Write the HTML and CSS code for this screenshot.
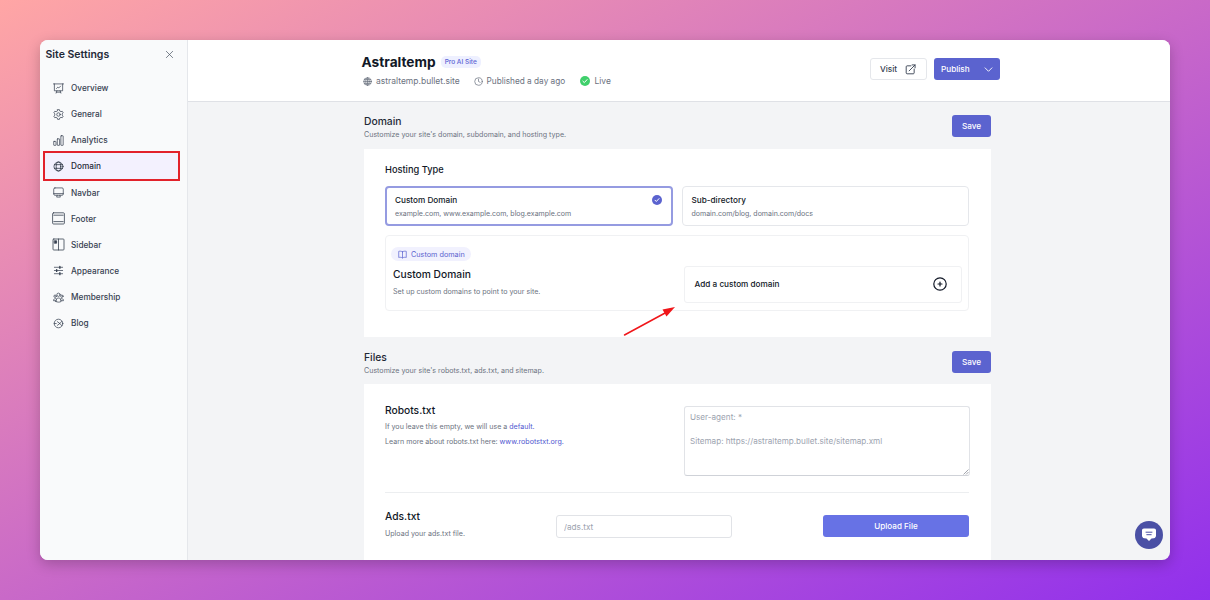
FILE: index.html
```html
<!DOCTYPE html>
<html lang="en">
<head>
    <meta charset="UTF-8">
    <meta name="viewport" content="width=device-width, initial-scale=1.0">
    <title>Site Settings</title>
    <link rel="stylesheet" href="styles.css">
</head>
<body>
    <div class="window">
        <aside class="sidebar">
            <div class="sidebar-head">
                <h2>Site Settings</h2>
                <svg class="close" viewBox="0 0 10 10"><path d="M1.5 1.5l7 7M8.5 1.5l-7 7"/></svg>
            </div>
            <nav class="menu">
                <a class="menu-item">
                    <svg viewBox="0 0 12 12"><path d="M.5 1h11M1.5 1v7.5h9V1M4.2 8.5l-.8 2.5M7.800 8.500l.8 2.500M3.800 10h4.400M3.800 6l1.500-1.500 1 .9 2-2"/></svg>
                    <span>Overview</span>
                </a>
                <a class="menu-item">
                    <svg viewBox="0 0 12 12"><path d="M5 .7h2l.4 1.500 1.200.7 1.500-.4 1 1.700-1.100 1.100v1.400l1.100 1.100-1 1.700-1.500-.4-1.200.7L7 11.300H5l-.4-1.500-1.200-.7-1.500.4-1-1.700L2 6.700V5.300L.9 4.200l1-1.700 1.500.4 1.200-.7z"/><circle cx="6" cy="6" r="1.900"/></svg>
                    <span>General</span>
                </a>
                <a class="menu-item">
                    <svg viewBox="0 0 12 12"><rect x=".8" y="7" width="2.500" height="4.300" rx=".4"/><rect x="4.700" y="4.200" width="2.500" height="7.100" rx=".4"/><rect x="8.600" y=".8" width="2.500" height="10.500" rx=".4"/></svg>
                    <span>Analytics</span>
                </a>
                <a class="menu-item active">
                    <svg viewBox="0 0 12 12"><circle cx="6" cy="6" r="4.900"/><ellipse cx="6" cy="6" rx="2.500" ry="4.900"/><path d="M1.700 4h8.600M1.700 8h8.600"/></svg>
                    <span>Domain</span>
                </a>
                <a class="menu-item">
                    <svg viewBox="0 0 12 12"><rect x=".8" y="1" width="10.400" height="8" rx="1.300"/><path d="M.8 7.200h10.400M4.500 9l-.5 2h4l-.5-2"/></svg>
                    <span>Navbar</span>
                </a>
                <a class="menu-item">
                    <svg class="wide" viewBox="0 0 13 13"><rect x=".6" y=".8" width="11.800" height="11.200" rx="1"/><path d="M1.800 3.200h9.400M1.800 9.600h9.400"/></svg>
                    <span>Footer</span>
                </a>
                <a class="menu-item">
                    <svg class="wide" viewBox="0 0 13 13"><rect x="1" y="1" width="11" height="11" rx=".8"/><path d="M6.500 1v11"/><path class="solid" d="M2.600 2.800h2v2.400h-2z"/></svg>
                    <span>Sidebar</span>
                </a>
                <a class="menu-item">
                    <svg viewBox="0 0 12 12"><path d="M1.500 2.500h9M1.500 6h9M1.500 9.500h9"/><path d="M7.500 1.500v2M4 5v2M7.500 8.500v2" stroke-width="1.500"/></svg>
                    <span>Appearance</span>
                </a>
                <a class="menu-item">
                    <svg viewBox="0 0 12 12"><circle cx="6" cy="3" r="1.800"/><circle cx="2.300" cy="4.600" r="1.300"/><circle cx="9.700" cy="4.600" r="1.300"/><path d="M3.200 10.400c-.1-5.200 5.700-5.200 5.600 0-1.700.9-3.900.9-5.600 0zM3.200 9.500H.6C.4 7.700 1.700 6.900 3.600 7.300M8.800 9.500h2.600c.2-1.800-1.100-2.600-3-2.200"/></svg>
                    <span>Membership</span>
                </a>
                <a class="menu-item">
                    <svg viewBox="0 0 12 12"><circle cx="6" cy="6" r="4.700"/><path d="M4.800 4l2.600 2-2.600 2M1.300 6h2.200M7.400 6l2.400-2.500M7.400 6l2.400 2.500"/></svg>
                    <span>Blog</span>
                </a>
            </nav>
        </aside>

        <div class="page">
            <header class="topbar">
                <div class="site">
                    <div class="site-title">
                        <h1>Astraltemp</h1>
                        <span class="plan">Pro AI Site</span>
                    </div>
                    <div class="site-meta">
                        <span class="meta url">
                            <svg viewBox="0 0 10 10"><circle cx="5" cy="5" r="4.200"/><ellipse cx="5" cy="5" rx="2" ry="4.200"/><path d="M.8 5h8.400M5 .8v8.400M1.500 2.900h7M1.500 7.100h7"/></svg>
                            astraltemp.bullet.site
                        </span>
                        <span class="meta published">
                            <svg viewBox="0 0 10 10"><circle cx="5" cy="5" r="4.200"/><path d="M5 2.300V5l1.800.9"/></svg>
                            Published a day ago
                        </span>
                        <span class="meta live">
                            <svg viewBox="0 0 10 10"><circle cx="5" cy="5" r="5"/><path d="M2.900 5.200l1.400 1.400 2.800-3"/></svg>
                            Live
                        </span>
                    </div>
                </div>
                <div class="actions">
                    <button class="btn-visit">
                        Visit
                        <svg viewBox="0 0 12 12"><path d="M6.500 2H2.300c-.6 0-1 .4-1 1v6.700c0 .6.4 1 1 1H9c.6 0 1-.4 1-1V5.500M4.500 7.500L11 1M7.800 1H11v3.200"/></svg>
                    </button>
                    <button class="btn-publish">
                        Publish
                        <svg viewBox="0 0 10 10"><path d="M1.200 3.200L5 7l3.800-3.800"/></svg>
                    </button>
                </div>
            </header>

            <main class="content">
                <section>
                    <div class="section-head">
                        <div>
                            <h3>Domain</h3>
                            <p>Customize your site's domain, subdomain, and hosting type.</p>
                        </div>
                        <button class="btn-save">Save</button>
                    </div>
                    <div class="card domain-card">
                        <h4>Hosting Type</h4>
                        <div class="options">
                            <div class="option selected">
                                <h5>Custom Domain</h5>
                                <p>example.com, www.example.com, blog.example.com</p>
                                <svg class="check" viewBox="0 0 10 10"><circle cx="5" cy="5" r="5"/><path d="M3 5.200l1.300 1.300L7 3.600"/></svg>
                            </div>
                            <div class="option">
                                <h5>Sub-directory</h5>
                                <p>domain.com/blog, domain.com/docs</p>
                            </div>
                        </div>
                        <div class="custom">
                            <div>
                                <span class="tag">
                                    <svg viewBox="0 0 10 10"><path d="M5 2C3.800 1.200 2.200 1.200.8 1.500v6.800C2.200 8 3.800 8 5 8.800c1.200-.8 2.800-.8 4.200-.5V1.500C7.800 1.200 6.200 1.200 5 2zM5 2v6.800"/></svg>
                                    Custom domain
                                </span>
                                <h4>Custom Domain</h4>
                                <p>Set up custom domains to point to your site.</p>
                            </div>
                            <div class="add-domain">
                                <span>Add a custom domain</span>
                                <svg viewBox="0 0 14 14"><circle cx="7" cy="7" r="6.200"/><path d="M7 5v4M5 7h4"/></svg>
                            </div>
                        </div>
                        <svg class="arrow" viewBox="0 0 54 32"><path d="M1.500 29L43 6.500"/><polygon points="52,1 39.500,3.500 43.500,10.500"/></svg>
                    </div>
                </section>

                <section>
                    <div class="section-head files-head">
                        <div>
                            <h3>Files</h3>
                            <p>Customize your site's robots.txt, ads.txt, and sitemap.</p>
                        </div>
                        <button class="btn-save">Save</button>
                    </div>
                    <div class="card files-card">
                        <div class="robots">
                            <div>
                                <h4>Robots.txt</h4>
                                <p>If you leave this empty, we will use a <a>default.</a></p>
                                <p>Learn more about robots.txt here: <a>www.robotstxt.org.</a></p>
                            </div>
                            <div class="editor">
                                <textarea placeholder="User-agent: *&#10;&#10;Sitemap: https://astraltemp.bullet.site/sitemap.xml"></textarea>
                                <svg class="grip" viewBox="0 0 6 6"><path d="M.8 5.200l4.400-4.400M3.300 5.200l1.900-1.900"/></svg>
                            </div>
                        </div>
                        <div class="ads">
                            <div>
                                <h4>Ads.txt</h4>
                                <p>Upload your ads.txt file.</p>
                            </div>
                            <input type="text" placeholder="/ads.txt">
                            <button class="btn-upload">Upload File</button>
                        </div>
                    </div>
                </section>
            </main>
        </div>

        <button class="chat">
            <svg viewBox="0 0 16 16"><path class="bubble" d="M3 1.500h10c1.400 0 2 .8 2 2v5c0 1.600-.8 2.500-2.200 2.700L10.500 11.500 8 14l-2.500-2.500-2.300-.3C1.800 11 1 10.100 1 8.500v-5c0-1.200.6-2 2-2z"/><path class="lines" d="M5 5.200h6M5.800 7.700h4.400"/></svg>
        </button>
    </div>
</body>
</html>
```
FILE: styles.css
```css
* {
    box-sizing: border-box;
}
body {
    margin: 0;
    height: 600px;
    padding: 40px;
    overflow: hidden;
    font-family: Inter, "Liberation Sans", sans-serif;
    color: #1f2937;
    background: linear-gradient(to bottom right, #ffa6a5, #c969c8 50%, #9130ec);
}
h1, h2, h3, h4, h5, p {
    margin: 0;
}
button, input, textarea {
    font-family: inherit;
}
svg {
    display: block;
    flex-shrink: 0;
    fill: none;
    stroke: currentColor;
    stroke-width: 0.8;
    stroke-linecap: round;
    stroke-linejoin: round;
}
.window {
    position: relative;
    display: flex;
    width: 1130px;
    height: 520px;
    overflow: hidden;
    border-radius: 8px;
    background-color: #f3f4f6;
    box-shadow: 0 4px 14px rgba(0, 0, 0, 0.22);
}

/* Sidebar */
.sidebar {
    width: 148px;
    flex-shrink: 0;
    background-color: #f9fafb;
    border-right: 1px solid #e5e7eb;
}
.sidebar-head {
    display: flex;
    justify-content: space-between;
    align-items: center;
    height: 29px;
    padding: 0 13px 0 5.5px;
}
.sidebar-head h2 {
    font-size: 10.5px;
    font-weight: 600;
}
.close {
    width: 9px;
    height: 9px;
    color: #4b5563;
}
.menu {
    padding: 6px 7px 0 3px;
}
.menu-item {
    display: flex;
    align-items: center;
    height: 26.13px;
    padding-left: 9px;
    font-size: 8.25px;
    font-weight: 500;
    color: #374151;
}
.menu-item svg {
    width: 11px;
    height: 11px;
    margin: 0 7.5px 0 0.5px;
}
.menu-item svg.wide {
    width: 13px;
    height: 13px;
    margin: 0 6px 0 0;
}
.menu-item .solid {
    fill: currentColor;
}
.menu-item.active {
    height: 30px;
    margin: -2px 0 -1.87px 0;
    padding-left: 7px;
    background-color: #f3f1fe;
    border: 2px solid #e2222b;
    color: #1f2937;
}

/* Top bar */
.page {
    flex: 1;
    min-width: 0;
}
.topbar {
    display: flex;
    justify-content: space-between;
    height: 62px;
    padding: 0 170px 0 173.5px;
    background-color: #fff;
    border-bottom: 1px solid #dfe1e6;
}
.site {
    padding-top: 12px;
}
.site-title {
    display: flex;
    align-items: center;
    height: 20px;
    gap: 5px;
}
.site-title h1 {
    font-size: 13.7px;
    font-weight: 700;
    color: #111827;
}
.plan {
    padding: 2px 4px;
    border-radius: 5px;
    font-size: 6.5px;
    line-height: 8px;
    font-weight: 500;
    color: #5b63d3;
    background-color: #eef0ff;
}
.site-meta {
    display: flex;
    margin-top: 3px;
    font-size: 8.5px;
    line-height: 12px;
    color: #6b7280;
}
.meta {
    display: flex;
    align-items: center;
    gap: 4px;
}
.meta svg {
    width: 9px;
    height: 9px;
}
.url {
    width: 112px;
    padding-left: 1.5px;
}
.published {
    width: 106px;
    font-size: 8.25px;
}
.live {
    gap: 5px;
}
.live svg {
    width: 10px;
    height: 10px;
    stroke: none;
    fill: #40d06c;
}
.live path, .check path {
    fill: none;
    stroke: #fff;
    stroke-width: 1;
}
.actions {
    display: flex;
    gap: 7px;
    padding-top: 18px;
}
.btn-visit, .btn-publish {
    display: flex;
    justify-content: space-between;
    align-items: center;
    height: 22px;
    font-size: 8.2px;
    font-weight: 500;
    border-radius: 3px;
}
.btn-visit {
    width: 57px;
    padding: 0 10px 0 9px;
    color: #374151;
    background-color: #fff;
    border: 1px solid #e5e7eb;
}
.btn-visit svg {
    width: 11px;
    height: 11px;
    stroke-width: 1;
}
.btn-publish {
    width: 66px;
    padding: 0 7px;
    color: #fff;
    background-color: #5b63cf;
    border: none;
}
.btn-publish svg {
    width: 9px;
    height: 9px;
    stroke-width: 1;
}

/* Content */
.content {
    width: 627px;
    margin-left: 176px;
}
.section-head {
    display: flex;
    justify-content: space-between;
    height: 47px;
    padding-top: 13px;
}
.section-head.files-head {
    padding-top: 14px;
}
.section-head h3 {
    font-size: 10.3px;
    line-height: 13px;
    font-weight: 500;
}
.section-head p {
    font-size: 7.1px;
    line-height: 13px;
    color: #6b7280;
}
.btn-save {
    width: 39px;
    height: 22px;
    padding: 0;
    font-size: 8.2px;
    font-weight: 500;
    color: #fff;
    background-color: #5b63cf;
    border: none;
    border-radius: 3px;
}
.card {
    position: relative;
    padding: 0 22px 0 21px;
    background-color: #fff;
}
.card h4 {
    font-size: 10.25px;
    line-height: 14px;
    font-weight: 500;
    color: #111827;
}
.card p {
    font-size: 7.1px;
    color: #6b7280;
}
.domain-card {
    height: 188px;
    padding-top: 14px;
}
.domain-card > h4 {
    font-size: 9.25px;
}
.options {
    display: flex;
    gap: 9px;
    margin-top: 9px;
}
.option {
    position: relative;
    flex: 1;
    height: 40px;
    padding: 8px 9px;
    border: 1px solid #e5e7eb;
    border-radius: 4px;
}
.option h5 {
    font-size: 8.2px;
    line-height: 11px;
    font-weight: 500;
    color: #111827;
}
.option p {
    margin-top: 2px;
    font-size: 7.03px;
    line-height: 11px;
}
.option.selected {
    padding: 7px 8px;
    border: 2px solid #959be1;
}
.check {
    position: absolute;
    top: 7px;
    right: 9px;
    width: 10px;
    height: 10px;
    stroke: none;
    fill: #5b63cf;
}
.custom {
    display: flex;
    justify-content: space-between;
    height: 76px;
    margin-top: 9px;
    padding: 11px 6px 0 7px;
    border: 1px solid #f0f1f3;
    border-radius: 4px;
}
.custom h4 {
    margin-top: 6px;
}
.custom p {
    margin-top: 5px;
    line-height: 11px;
}
.tag {
    display: flex;
    align-items: center;
    gap: 4px;
    width: 80px;
    height: 14px;
    margin-left: -2px;
    padding-left: 7px;
    border-radius: 7px;
    font-size: 7.25px;
    color: #5b63cf;
    background-color: #f1f1fe;
}
.tag svg {
    width: 9px;
    height: 9px;
}
.add-domain {
    display: flex;
    justify-content: space-between;
    align-items: center;
    width: 278px;
    height: 37px;
    margin-top: 19px;
    padding: 0 14px 1px 9.5px;
    border: 1px solid #f0f1f3;
    border-radius: 3px;
    font-size: 8.2px;
    font-weight: 500;
    color: #111827;
}
.add-domain svg {
    width: 14px;
    height: 14px;
    stroke-width: 1.2;
}
/* Arrow pointing at the add button */
.arrow {
    position: absolute;
    left: 259px;
    top: 157px;
    width: 54px;
    height: 32px;
    stroke: #f0161a;
    stroke-width: 1.5;
}
.arrow polygon {
    fill: #f0161a;
    stroke: none;
}

/* Files */
.files-card {
    height: 180px;
    padding-top: 22px;
}
.robots {
    display: flex;
    justify-content: space-between;
    height: 87px;
    border-bottom: 1px solid #eceef0;
}
.robots h4 {
    line-height: 8px;
    margin-bottom: 6px;
}
.robots p {
    line-height: 14.5px;
}
.files-card a {
    color: #4f57d0;
}
.editor {
    position: relative;
    width: 286px;
    height: 70px;
    margin-right: -1px;
}
textarea {
    display: block;
    width: 100%;
    height: 100%;
    padding: 4px 5px;
    resize: none;
    font-size: 8.13px;
    line-height: 12px;
    border: 1px solid #e1e3e7;
    border-bottom-color: #cfd2d8;
    border-radius: 3px;
    background-color: #fff;
}
.grip {
    position: absolute;
    right: 1px;
    bottom: 1px;
    width: 6px;
    height: 6px;
    color: #8b8f98;
}
textarea::placeholder, input::placeholder {
    color: #9ca3af;
}
.ads {
    display: grid;
    grid-template-columns: 171px 176px 1fr;
    padding-top: 16px;
}
.ads p {
    margin-top: 5px;
    line-height: 11px;
}
.ads input {
    height: 23px;
    margin-top: 6px;
    padding: 0 7px;
    font-size: 8.2px;
    border: 1px solid #e1e3e7;
    border-radius: 3px;
}
.btn-upload {
    width: 146px;
    height: 22px;
    margin-top: 6px;
    justify-self: end;
    font-size: 8.1px;
    font-weight: 500;
    color: #fff;
    background-color: #6772e5;
    border: none;
    border-radius: 3px;
}

/* Chat bubble */
.chat {
    position: absolute;
    right: 7px;
    bottom: 11px;
    display: flex;
    justify-content: center;
    align-items: center;
    width: 28px;
    height: 28px;
    padding: 0;
    border: none;
    border-radius: 50%;
    background-color: #4a50a5;
}
.chat svg {
    width: 16px;
    height: 16px;
}
.chat .bubble {
    fill: #fff;
    stroke: none;
}
.chat .lines {
    stroke: #4a50a5;
    stroke-width: 1;
}
```
